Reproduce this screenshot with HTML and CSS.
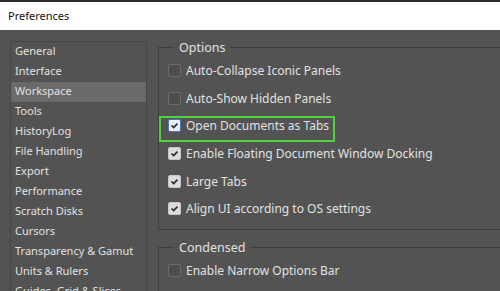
FILE: index.html
```html
<!DOCTYPE html>
<html lang="en">
<head>
  <meta charset="UTF-8">
  <title>Preferences</title>
  <link rel="stylesheet" href="styles.css">
</head>
<body>

<!-- Title Bar -->
<div class="title-bar">Preferences</div>

<div class="main">
  <!-- Category List -->
  <ul class="category-list">
    <li>General</li>
    <li>Interface</li>
    <li class="selected">Workspace</li>
    <li>Tools</li>
    <li>HistoryLog</li>
    <li>File Handling</li>
    <li>Export</li>
    <li>Performance</li>
    <li>Scratch Disks</li>
    <li>Cursors</li>
    <li>Transparency &amp; Gamut</li>
    <li>Units &amp; Rulers</li>
    <li>Guides, Grid &amp; Slices</li>
  </ul>

  <!-- Settings -->
  <div class="settings">
    <fieldset class="group options">
      <legend>Options</legend>
      <div class="row"><span class="check"></span>Auto-Collapse Iconic Panels</div>
      <div class="row"><span class="check"></span>Auto-Show Hidden Panels</div>
      <div class="row">
        <span class="check on focus"><svg viewBox="0 0 13 13"><path d="M3 6.5 L5.5 9 L10 4.2"/></svg></span>Open Documents as Tabs
        <span class="highlight"></span>
      </div>
      <div class="row"><span class="check on"><svg viewBox="0 0 13 13"><path d="M3 6.5 L5.5 9 L10 4.2"/></svg></span>Enable Floating Document Window Docking</div>
      <div class="row"><span class="check on"><svg viewBox="0 0 13 13"><path d="M3 6.5 L5.5 9 L10 4.2"/></svg></span>Large Tabs</div>
      <div class="row"><span class="check on"><svg viewBox="0 0 13 13"><path d="M3 6.5 L5.5 9 L10 4.2"/></svg></span>Align UI according to OS settings</div>
    </fieldset>

    <fieldset class="group condensed">
      <legend>Condensed</legend>
      <div class="row"><span class="check"></span>Enable Narrow Options Bar</div>
      <div class="row"><span class="check"></span>Show Channels in Color</div>
    </fieldset>
  </div>
</div>

</body>
</html>
```

FILE: styles.css
```css
/* Basic Styling */
body {
  font-family: "Noto Sans", "Open Sans", sans-serif;
  font-size: 12px;
  margin: 0;
  background-color: #535353;
  color: #e2e2e2;
  overflow: hidden;
  width: 500px;
  height: 291px;
}
.title-bar {
  height: 28px;
  line-height: 28px;
  background-color: #fff;
  color: #111;
  font-size: 11px;
  padding-left: 8px;
  border-top: 2px solid #2b2b2b;
}
.main {
  display: flex;
  height: 250px;
  overflow: hidden;
  padding: 11px 0 0 10px;
}
.category-list {
  list-style: none;
  margin: 0;
  padding: 0;
  width: 135px;
  height: 260px;
  border: 1px solid #474747;
  flex-shrink: 0;
}
.category-list li {
  height: 20px;
  line-height: 18px;
  padding-left: 4px;
  font-size: 11px;
  white-space: nowrap;
}
.category-list li.selected {
  background-color: #6a6a6a;
}
.settings {
  margin-left: 11px;
  flex: 1;
  margin-right: -30px;
}
.group {
  margin: -2px 0 0 0;
  border: 1px solid #3e3e3e;
  padding: 1px 0 6px 9px;
}
.group legend {
  margin-left: 6px;
  padding: 0 5px;
  line-height: 17px;
  font-size: 12.5px;
}
.condensed {
  margin-top: 9px;
}
.row {
  position: relative;
  display: flex;
  align-items: center;
  height: 27.6px;
  white-space: nowrap;
}
.check {
  display: inline-flex;
  width: 11px;
  height: 11px;
  border: 1px solid #6c6c6c;
  border-radius: 2px;
  background-color: #4d4d4d;
  margin-right: 5px;
  flex-shrink: 0;
}
.check.on {
  background-color: #dcdcdc;
  border-color: #c8c8c8;
}
.check.focus {
  background-color: #eef0f6;
  border-color: #4a78c8;
}
.check svg {
  width: 11px;
  height: 11px;
}
.check path {
  fill: none;
  stroke: #2a2a2a;
  stroke-width: 2;
}
.highlight {
  position: absolute;
  left: -9px;
  top: 4px;
  width: 172px;
  height: 22px;
  border: 2px solid #4fd33c;
}
```
